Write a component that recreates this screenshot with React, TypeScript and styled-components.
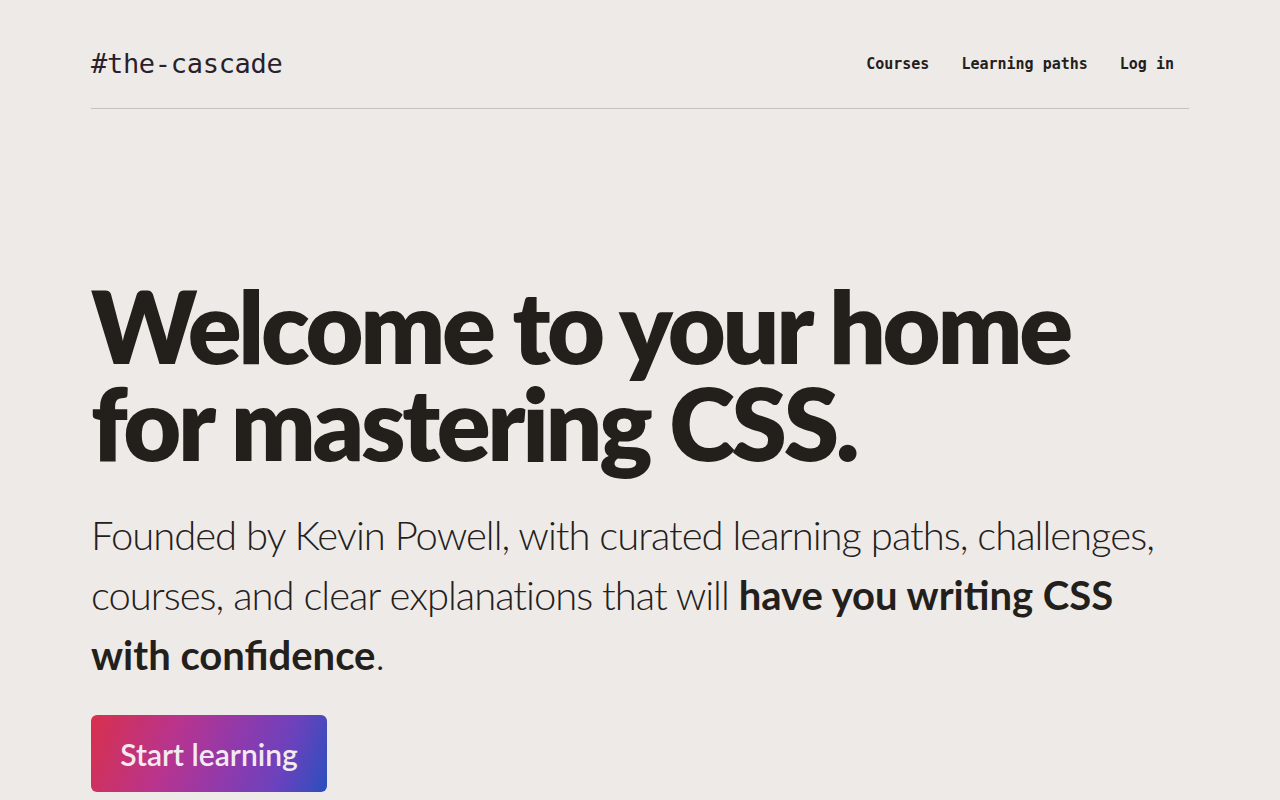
import React from "react";
import styled, { createGlobalStyle } from "styled-components";

const Global = createGlobalStyle`
  html, body { margin: 0; padding: 0; }
  body {
    background: #eeeae7;
    color: #23201c;
    font-family: "Lato", "Noto Sans", sans-serif;
  }
  * { box-sizing: border-box; }
`;

const Page = styled.div`
  width: 1098px;
  margin: 0 auto;
`;

const Header = styled.header`
  display: flex;
  align-items: center;
  justify-content: space-between;
  height: 109px;
  padding-top: 19px;
  border-bottom: 1px solid #c6c1bd;
`;

const Logo = styled.a`
  font-family: "DejaVu Sans Mono", monospace;
  font-size: 27px;
  color: #2a1f2a;
  text-decoration: none;
  letter-spacing: -0.3px;
`;

const Nav = styled.nav`
  display: flex;
  gap: 32px;
  padding-right: 15px;
`;

const NavLink = styled.a`
  font-family: "DejaVu Sans Mono", monospace;
  font-size: 15px;
  font-weight: 600;
  color: #23201c;
  text-decoration: none;
`;

const Hero = styled.section`
  padding-top: 168px;
`;

const Title = styled.h1`
  margin: 0;
  font-size: 100px;
  line-height: 97px;
  font-weight: 800;
  letter-spacing: -3.3px;
`;

const Lead = styled.p`
  margin: 34px 0 0;
  font-size: 40px;
  line-height: 60px;
  font-weight: 300;
  letter-spacing: -1px;
  strong { font-weight: 700; letter-spacing: 0; }
`;

const Button = styled.a`
  display: inline-flex;
  align-items: center;
  justify-content: center;
  margin-top: 30px;
  width: 236px;
  height: 77px;
  border-radius: 6px;
  background: linear-gradient(110deg, #d8304c 0%, #b7348f 35%, #8e3aad 60%, #6a42bd 80%, #2a4fbd 100%);
  color: #f3e9ef;
  font-size: 30px;
  font-weight: 600;
  text-decoration: none;
`;

export default function App() {
  return (
    <>
      <Global />
      <Page>
        <Header>
          <Logo href="#">#the-cascade</Logo>
          <Nav>
            <NavLink href="#">Courses</NavLink>
            <NavLink href="#">Learning paths</NavLink>
            <NavLink href="#">Log in</NavLink>
          </Nav>
        </Header>
        <Hero>
          <Title>Welcome to your home for mastering CSS.</Title>
          <Lead>
            Founded by Kevin Powell, with curated learning paths, challenges, courses, and clear explanations that will{" "}
            <strong>have you writing CSS with{"\u00a0"}confidence</strong>.
          </Lead>
          <Button href="#">Start learning</Button>
        </Hero>
      </Page>
    </>
  );
}
